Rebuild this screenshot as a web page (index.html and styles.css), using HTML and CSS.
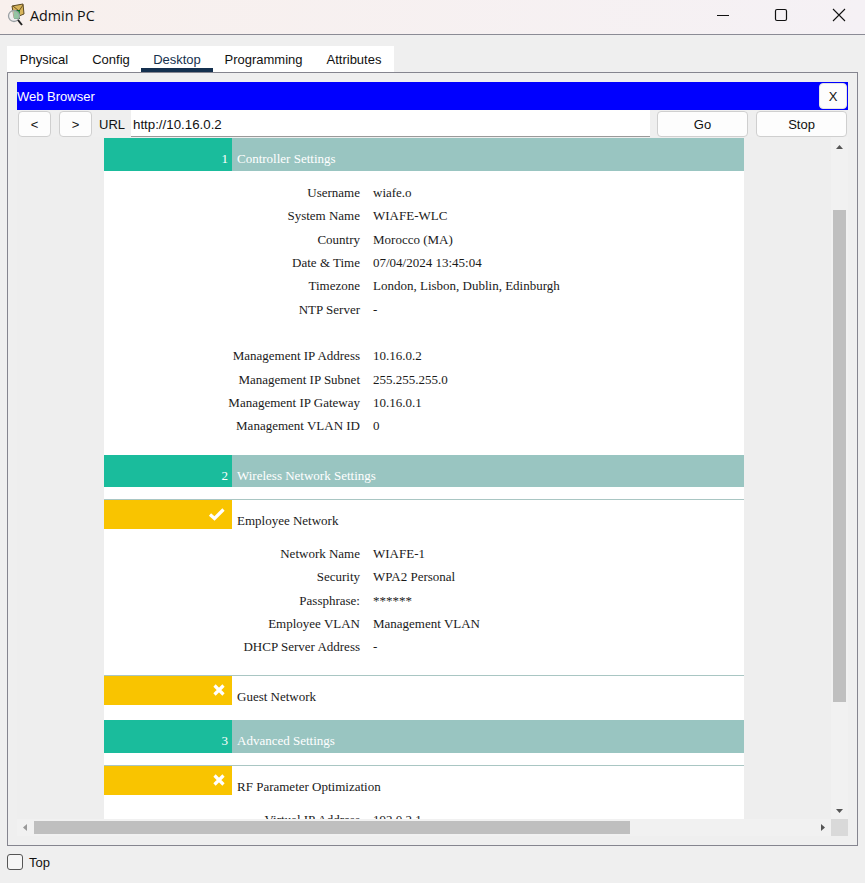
FILE: index.html
```html
<!DOCTYPE html>
<html lang="en">
<head>
<meta charset="utf-8">
<title>Admin PC</title>
<link rel="stylesheet" href="styles.css">
</head>
<body>
<div class="window">
  <header class="titlebar">
    <svg class="app-icon" width="22" height="24" viewBox="0 0 22 24">
      <path d="M8 3 L19 1 L20 11 L10 15 Z" fill="#d8b45a" stroke="#5c4a22" stroke-width="1"/>
      <path d="M9 3 L15 8 L19 2" fill="none" stroke="#6b5526" stroke-width="1"/>
      <rect x="10" y="7" width="6" height="9" fill="#0f6b2a"/>
      <path d="M11 8v7M13 8v7M15 8v7" stroke="#46c060" stroke-width="1"/>
      <circle cx="10" cy="13" r="5.5" fill="#e9edf0" fill-opacity=".55" stroke="#9aa0a4" stroke-width="1.3"/>
      <path d="M14 17 L18 22" stroke="#222" stroke-width="2"/>
    </svg>
    <span class="title">Admin PC</span>
    <div class="win-controls">
      <svg width="14" height="14" viewBox="0 0 14 14"><path d="M1 7.5H13" stroke="#111" stroke-width="1"/></svg>
      <svg width="14" height="14" viewBox="0 0 14 14"><rect x="1.5" y="1.5" width="11" height="11" rx="1.5" fill="none" stroke="#111" stroke-width="1.2"/></svg>
      <svg width="14" height="14" viewBox="0 0 14 14"><path d="M1 1L13 13M13 1L1 13" stroke="#111" stroke-width="1.1"/></svg>
    </div>
  </header>

  <nav class="tabs">
    <span class="tab">Physical</span>
    <span class="tab">Config</span>
    <span class="tab tab-active">Desktop</span>
    <span class="tab">Programming</span>
    <span class="tab">Attributes</span>
  </nav>

  <main class="panel">
    <div class="browser-bar">
      <span class="browser-title">Web Browser</span>
      <button class="btn btn-close">X</button>
    </div>
    <div class="url-row">
      <button class="btn btn-nav">&lt;</button>
      <button class="btn btn-nav">&gt;</button>
      <span class="url-label">URL</span>
      <div class="url-input">http://10.16.0.2</div>
      <button class="btn btn-action">Go</button>
      <button class="btn btn-action">Stop</button>
    </div>

    <div class="viewport">
      <div class="page-area">
        <div class="page">
          <section class="sec-head first">
            <div class="num">1</div>
            <div class="sec-title">Controller Settings</div>
          </section>
          <div class="rows rows-a">
            <div class="row"><span class="k">Username</span><span class="v">wiafe.o</span></div>
            <div class="row"><span class="k">System Name</span><span class="v">WIAFE-WLC</span></div>
            <div class="row"><span class="k">Country</span><span class="v">Morocco (MA)</span></div>
            <div class="row"><span class="k">Date &amp; Time</span><span class="v">07/04/2024 13:45:04</span></div>
            <div class="row"><span class="k">Timezone</span><span class="v">London, Lisbon, Dublin, Edinburgh</span></div>
            <div class="row"><span class="k">NTP Server</span><span class="v">-</span></div>
            <div class="row"><span class="k">&nbsp;</span><span class="v"></span></div>
            <div class="row"><span class="k">Management IP Address</span><span class="v">10.16.0.2</span></div>
            <div class="row"><span class="k">Management IP Subnet</span><span class="v">255.255.255.0</span></div>
            <div class="row"><span class="k">Management IP Gateway</span><span class="v">10.16.0.1</span></div>
            <div class="row"><span class="k">Management VLAN ID</span><span class="v">0</span></div>
          </div>

          <section class="sec-head short">
            <div class="num">2</div>
            <div class="sec-title">Wireless Network Settings</div>
          </section>
          <section class="sub sub-first">
            <div class="flag">
              <svg width="18" height="14" viewBox="0 0 18 14"><path d="M2 7.5L6.5 11.5L15.5 2.5" fill="none" stroke="#fff" stroke-width="3.2"/></svg>
            </div>
            <div class="sub-title">Employee Network</div>
          </section>
          <div class="rows rows-b">
            <div class="row"><span class="k">Network Name</span><span class="v">WIAFE-1</span></div>
            <div class="row"><span class="k">Security</span><span class="v">WPA2 Personal</span></div>
            <div class="row"><span class="k">Passphrase:</span><span class="v">******</span></div>
            <div class="row"><span class="k">Employee VLAN</span><span class="v">Management VLAN</span></div>
            <div class="row"><span class="k">DHCP Server Address</span><span class="v">-</span></div>
          </div>
          <section class="sub sub-guest">
            <div class="flag">
              <svg width="14" height="14" viewBox="0 0 14 14"><path d="M2.5 2.5L11.5 11.5M11.5 2.5L2.5 11.5" fill="none" stroke="#fff" stroke-width="3.2"/></svg>
            </div>
            <div class="sub-title">Guest Network</div>
          </section>

          <section class="sec-head">
            <div class="num">3</div>
            <div class="sec-title">Advanced Settings</div>
          </section>
          <section class="sub sub-first">
            <div class="flag">
              <svg width="14" height="14" viewBox="0 0 14 14"><path d="M2.5 2.5L11.5 11.5M11.5 2.5L2.5 11.5" fill="none" stroke="#fff" stroke-width="3.2"/></svg>
            </div>
            <div class="sub-title">RF Parameter Optimization</div>
          </section>
          <div class="rows rows-c">
            <div class="row"><span class="k">Virtual IP Address</span><span class="v">192.0.2.1</span></div>
          </div>
        </div>
      </div>

      <div class="vbar">
        <svg class="arrow" width="9" height="6" viewBox="0 0 9 6"><path d="M4.5 1L8 5H1Z" fill="#555"/></svg>
        <div class="vtrack"><div class="vthumb"></div></div>
        <svg class="arrow" width="9" height="6" viewBox="0 0 9 6"><path d="M4.5 5L8 1H1Z" fill="#555"/></svg>
      </div>
      <div class="hbar">
        <svg class="arrow" width="6" height="9" viewBox="0 0 6 9"><path d="M1 4.5L5 1V8Z" fill="#999"/></svg>
        <div class="htrack"><div class="hthumb"></div></div>
        <svg class="arrow" width="6" height="9" viewBox="0 0 6 9"><path d="M5 4.5L1 1V8Z" fill="#555"/></svg>
      </div>
      <div class="corner"></div>
    </div>
  </main>

  <footer class="footer">
    <span class="checkbox"></span>
    <span class="top-label">Top</span>
  </footer>
</div>
</body>
</html>
```
FILE: styles.css
```css
* { box-sizing: border-box; }
html, body { margin: 0; padding: 0; }
body {
  width: 865px;
  height: 883px;
  overflow: hidden;
  background: #efefef;
  font-family: "Liberation Sans", Arial, sans-serif;
  font-size: 13px;
  color: #111;
}
.window { display: flex; flex-direction: column; height: 883px; }

.titlebar {
  height: 35px;
  display: flex;
  align-items: center;
  padding-left: 4px;
  background: linear-gradient(90deg, #f8f0ed, #f5f1f5);
  border-bottom: 1px solid #8b8b95;
  flex: none;
}
.app-icon { flex: none; margin-top: -4px; }
.title { margin: -4px 0 0 4px; font-family: "Open Sans", sans-serif; font-size: 14.3px; color: #111; }
.win-controls { margin-left: auto; display: flex; gap: 44px; padding-right: 19px; margin-top: -5px; }

.tabs {
  margin: 11px 0 0 7px;
  width: 387px;
  height: 26px;
  display: flex;
  background: #fff;
  flex: none;
}
.tab {
  padding-top: 6px;
  font-size: 13px;
  line-height: 15px;
  height: 26px;
  text-align: center;
}
.tab:nth-child(1) { width: 74px; }
.tab:nth-child(2) { width: 60px; }
.tab:nth-child(3) { width: 72px; }
.tab:nth-child(4) { width: 101px; }
.tab:nth-child(5) { width: 80px; }
.tab-active { border-bottom: 4px solid #14304f; color: #16314e; }

.panel {
  width: 851px;
  height: 774px;
  margin-left: 7px;
  border: 1px solid #85858f;
  padding: 9px 9px 0;
  flex: none;
  display: flex;
  flex-direction: column;
}
.browser-bar {
  height: 28px;
  background: #0000ff;
  color: #fff;
  display: flex;
  align-items: center;
  justify-content: space-between;
  padding-right: 1px;
  flex: none;
  font-size: 13px;
}
.browser-title { padding-top: 1px; }
.btn {
  background: #fdfdfd;
  border: 1px solid #cfcfcf;
  border-radius: 4px;
  padding: 0;
  font-family: "Liberation Sans", Arial, sans-serif;
  font-size: 13px;
  line-height: 15px;
  color: #111;
}
.btn-close { width: 28px; height: 26px; border-color: #e4e4e4; }
.url-row {
  height: 27px;
  display: flex;
  align-items: flex-start;
  flex: none;
}
.url-row .btn { height: 26px; margin-top: 1px; }
.btn-nav { width: 33px; margin: 0 8px 0 1px; }
.btn-nav + .btn-nav { margin-left: 0; margin-right: 0; }
.url-label { width: 39px; padding: 7px 0 0 7px; font-size: 13px; line-height: 15px; }
.url-input {
  width: 519px;
  height: 27px;
  background: #fff;
  border-bottom: 1px solid #9a9a9a;
  padding: 7px 0 0 2px;
  font-size: 13.3px;
  line-height: 15px;
}
.btn-action { width: 91px; margin-left: 7px; }
.btn-action + .btn-action { margin-left: 8px; }

.viewport {
  width: 831px;
  height: 699px;
  display: grid;
  grid-template-columns: 814px 17px;
  grid-template-rows: 682px 17px;
  flex: none;
}
.page-area { background: #eeeeee; overflow: hidden; padding-left: 87px; }
.page {
  width: 640px;
  background: #fff;
  font-family: "Liberation Serif", "Times New Roman", serif;
  font-size: 13px;
  line-height: 15px;
  color: #1a1a1a;
}

.sec-head { display: grid; grid-template-columns: 128px 1fr; height: 33px; color: #fff; }
.sec-head.first { margin-top: 1px; }
.sec-head.short { height: 32px; }
.num {
  background: #1abc9c;
  text-align: right;
  padding: 13px 4px 0 0;
  font-size: 13px;
}
.sec-title {
  background: #99c5c1;
  padding: 13px 0 0 5px;
  font-size: 13px;
}

.rows { display: flex; flex-direction: column; }
.row { display: grid; grid-template-columns: 256px 1fr; column-gap: 13px; height: 23.3px; align-items: center; }
.k { text-align: right; }
.rows-a { padding-top: 10px; height: 284px; }
.rows-b { padding-top: 12.8px; height: 146px; }
.rows-c { padding-top: 12.8px; }

.sub { display: grid; grid-template-columns: 128px 1fr; border-top: 1px solid #a9c6c3; height: 30px; }
.sub-first { margin-top: 12px; }
.sub-guest { height: 45px; }
.sub-guest .flag { height: 29px; }
.flag {
  background: #f9c400;
  height: 29px;
  display: flex;
  align-items: center;
  justify-content: flex-end;
  padding: 0 6px 2px 0;
}
.sub-title { padding: 13px 0 0 5px; }

.vbar {
  background: #f1f1f1;
  display: flex;
  flex-direction: column;
  align-items: center;
  padding: 7px 0 5px;
}
.vtrack { flex: 1; width: 13px; padding-top: 60px; }
.vthumb { width: 13px; height: 492px; background: #bfbfbf; }
.hbar {
  background: #f1f1f1;
  display: flex;
  align-items: center;
  padding: 0 5px 0 5px;
}
.htrack { flex: 1; height: 13px; padding-left: 6px; }
.hthumb { width: 596px; height: 13px; background: #bfbfbf; }
.arrow { flex: none; }
.corner { background: #d9d9d9; }

.footer {
  flex: 1;
  display: flex;
  align-items: flex-start;
  padding: 8px 0 0 7px;
  gap: 6px;
  font-size: 13px;
  line-height: 16px;
}
.top-label { padding-top: 1px; }
.checkbox {
  width: 16px;
  height: 16px;
  border: 1px solid #555;
  border-radius: 3px;
  background: #f5f5f5;
}
```
